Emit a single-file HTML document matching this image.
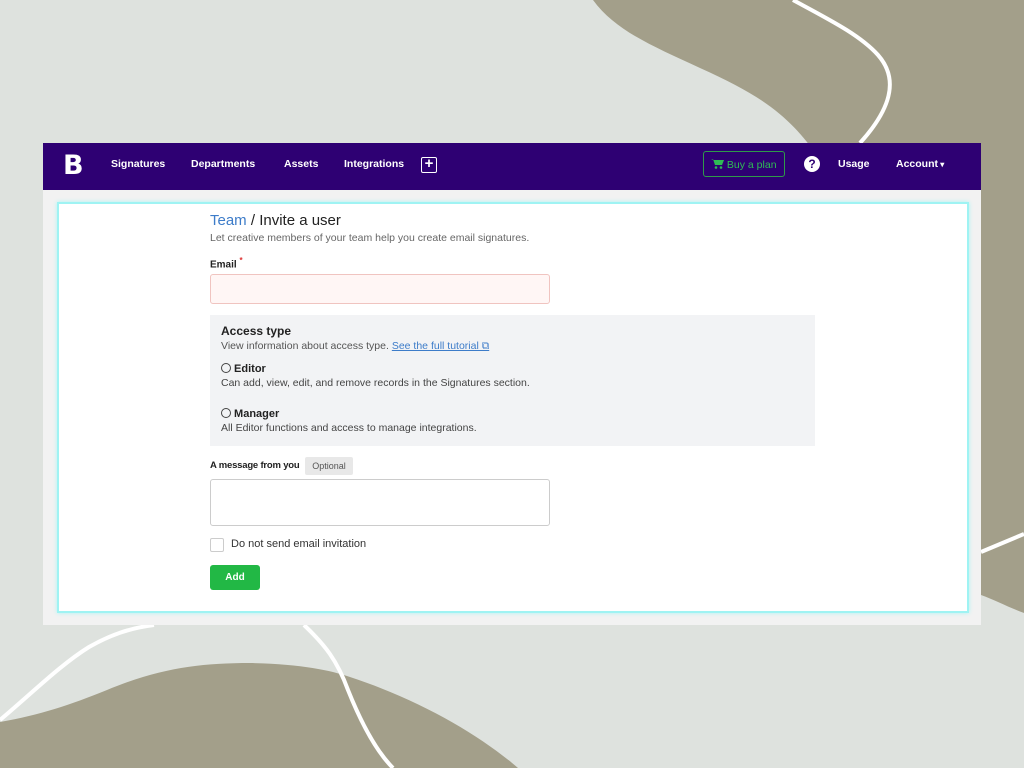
<!DOCTYPE html>
<html><head><meta charset="utf-8"><style>
*{margin:0;padding:0;box-sizing:border-box}
body{width:1024px;height:768px;overflow:hidden;background:#dee2de;font-family:"Liberation Sans",sans-serif;position:relative}
svg.bg{position:absolute;left:0;top:0}
.frame{position:absolute;left:43px;top:143px;width:938px;height:482px;background:#f2f2f2}
.nav{position:absolute;left:0;top:0;width:938px;height:47px;background:#2e0073;color:#fff;font-size:10.5px;font-weight:bold}
.nav span{position:absolute;top:15px}
.card{position:absolute;left:14px;top:59px;width:912px;height:411px;background:#fff;border:2px solid #9ff3f3;box-shadow:0 0 4px #a8f5f5}
.a{position:absolute;white-space:nowrap}
</style></head><body>
<svg class="bg" width="1024" height="768">
<path d="M593 0 C615 30 650 45 700 68 C760 95 790 115 820 160 L980 400 L981 595 C995 600 1010 608 1024 613 L1024 0 Z" fill="#a39f8a"/>
<path d="M793 0 C830 20 860 35 878 55 C900 80 890 110 860 143" stroke="#fff" stroke-width="4" fill="none"/>
<path d="M981 552 C995 546 1010 540 1024 534" stroke="#fff" stroke-width="4" fill="none"/>
<path d="M0 722 C40 715 70 705 107 690 C160 668 200 663 250 663 C300 664 330 670 350 677 C420 700 480 735 518 768 L0 768 Z" fill="#a39f8a"/>
<path d="M0 720 C30 695 60 665 89 647 C110 635 130 628 154 625" stroke="#fff" stroke-width="4" fill="none"/>
<path d="M304 625 C325 645 337 660 348 690 C360 720 375 750 393 768" stroke="#fff" stroke-width="4" fill="none"/>
</svg>
<div class="frame">
 <div class="nav">
  <span style="left:20px;top:7px;font-size:27px;font-weight:900;font-family:'DejaVu Sans',sans-serif">B</span>
  <span style="left:68px">Signatures</span>
  <span style="left:148px">Departments</span>
  <span style="left:241px">Assets</span>
  <span style="left:301px">Integrations</span>
  <span style="left:378px;top:14px;width:16px;height:16px;border:1.5px solid #fff;border-radius:2px;font-size:15px;line-height:12px;text-align:center">+</span>
  <span style="left:660px;top:8px;width:82px;height:26px;border:1px solid #2f9a4a;border-radius:3px;color:#2fbb55;font-weight:normal;padding:6px 0 0 7px">
   <svg width="13" height="11" viewBox="0 0 13 11" style="vertical-align:-1px"><path d="M0 1h2l2 6h7l2-5H3" fill="#2fbb55"/><circle cx="5" cy="9.5" r="1.3" fill="#2fbb55"/><circle cx="10" cy="9.5" r="1.3" fill="#2fbb55"/></svg> Buy a plan</span>
  <span style="left:761px;top:13px;width:16px;height:16px;border-radius:50%;background:#fff;color:#2e0073;text-align:center;font-size:12px;line-height:16px">?</span>
  <span style="left:795px">Usage</span>
  <span style="left:853px">Account<span style="position:static;font-size:8px"> ▾</span></span>
 </div>
 <div class="card">
  <div class="a" style="left:151px;top:8px;font-size:15px;color:#222"><span style="color:#3d7cc9">Team</span> / Invite a user</div>
  <div class="a" style="left:151px;top:28px;font-size:10.5px;color:#666">Let creative members of your team help you create email signatures.</div>
  <div class="a" style="left:151px;top:52px;font-size:10px;font-weight:bold;color:#222">Email <sup style="color:#d33;font-size:8px">*</sup></div>
  <div class="a" style="left:151px;top:70px;width:340px;height:30px;background:#fff6f5;border:1px solid #f0c4c0;border-radius:3px"></div>
  <div class="a" style="left:151px;top:111px;width:605px;height:131px;background:#f2f3f5"></div>
  <div class="a" style="left:162px;top:120px;font-size:12px;font-weight:bold;color:#222">Access type</div>
  <div class="a" style="left:162px;top:136px;font-size:10.5px;color:#555">View information about access type. <span style="color:#3d7cc9;text-decoration:underline">See the full tutorial ⧉</span></div>
  <div class="a" style="left:162px;top:159px;font-size:11px;font-weight:bold;color:#222"><span style="display:inline-block;width:10px;height:10px;border:1px solid #444;border-radius:50%;vertical-align:-1px"></span> Editor</div>
  <div class="a" style="left:162px;top:173px;font-size:10.5px;color:#444">Can add, view, edit, and remove records in the Signatures section.</div>
  <div class="a" style="left:162px;top:204px;font-size:11px;font-weight:bold;color:#222"><span style="display:inline-block;width:10px;height:10px;border:1px solid #444;border-radius:50%;vertical-align:-1px"></span> Manager</div>
  <div class="a" style="left:162px;top:218px;font-size:10.5px;color:#444">All Editor functions and access to manage integrations.</div>
  <div class="a" style="left:151px;top:256px;font-size:9.5px;font-weight:bold;color:#222;letter-spacing:-0.2px">A message from you</div>
  <div class="a" style="left:246px;top:253px;width:48px;height:18px;background:#e8e8e8;border-radius:2px;font-size:9px;color:#555;text-align:center;line-height:18px">Optional</div>
  <div class="a" style="left:151px;top:275px;width:340px;height:47px;border:1px solid #ccc;border-radius:3px"></div>
  <div class="a" style="left:151px;top:334px;width:14px;height:14px;border:1px solid #ccc;border-radius:2px"></div>
  <div class="a" style="left:172px;top:334px;font-size:11px;color:#333">Do not send email invitation</div>
  <div class="a" style="left:151px;top:361px;width:50px;height:25px;background:#22b845;border-radius:3px;color:#fff;font-size:10px;font-weight:bold;text-align:center;line-height:25px">Add</div>
 </div>
</div>
</body></html>
